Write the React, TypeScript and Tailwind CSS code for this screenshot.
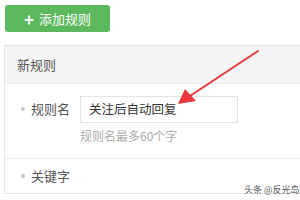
export default function App() {
  return (
    <div
      className="relative h-[200px] w-[300px] overflow-hidden bg-white"
      style={{ fontFamily: '"Noto Sans CJK SC", "Noto Sans", sans-serif' }}
    >
      {/* Add rule button */}
      <div className="pl-[5px] pt-[5px]">
        <button className="flex h-[27px] w-[105px] items-center justify-center gap-[5px] rounded-[3px] bg-[#5cb85c] text-[13px] text-white">
          <span className="text-[17px] font-bold leading-none">+</span>
          <span className="leading-none">添加规则</span>
        </button>
      </div>

      {/* Rule panel */}
      <div className="ml-[4px] mt-[13px] border border-r-0 border-[#e6e6e6]">
        <div className="flex h-[37px] items-center bg-[#f5f5f5] pl-[12px] text-[13px] text-[#555]">
          新规则
        </div>

        <div className="flex border-t border-[#ebebeb] pb-[14px] pt-[12px]">
          <div className="flex h-[26px] w-[75px] items-center pl-[16px] text-[13px] text-[#555]">
            <span className="mr-[6px] size-[4px] rounded-full bg-[#c4c4c4]" />
            规则名
          </div>
          <div className="flex flex-col">
            <div className="flex h-[27px] w-[158px] items-center border border-[#e3e3e3] pl-[8px] text-[12.5px] text-[#333]">
              关注后自动回复
            </div>
            <div className="mt-[5px] text-[12px] leading-[16px] text-[#aaa]">规则名最多60个字</div>
          </div>
        </div>

        <div className="flex h-[35px] items-center border-t border-[#ebebeb] pl-[16px] text-[13px] text-[#555]">
          <span className="mr-[6px] size-[4px] rounded-full bg-[#c4c4c4]" />
          关键字
        </div>
      </div>

      {/* Watermark */}
      <div className="absolute left-[244px] top-[183px] text-[9px] text-[#555]">头条 @反光岛</div>

      {/* Red annotation arrow */}
      <svg className="absolute left-0 top-0" width="300" height="200" viewBox="0 0 300 200">
        <line x1="258" y1="51" x2="190" y2="96" stroke="#e8363a" strokeWidth="2" strokeLinecap="round" />
        <polygon points="178,104 185,89 196,101" fill="#e8363a" />
      </svg>
    </div>
  );
}
